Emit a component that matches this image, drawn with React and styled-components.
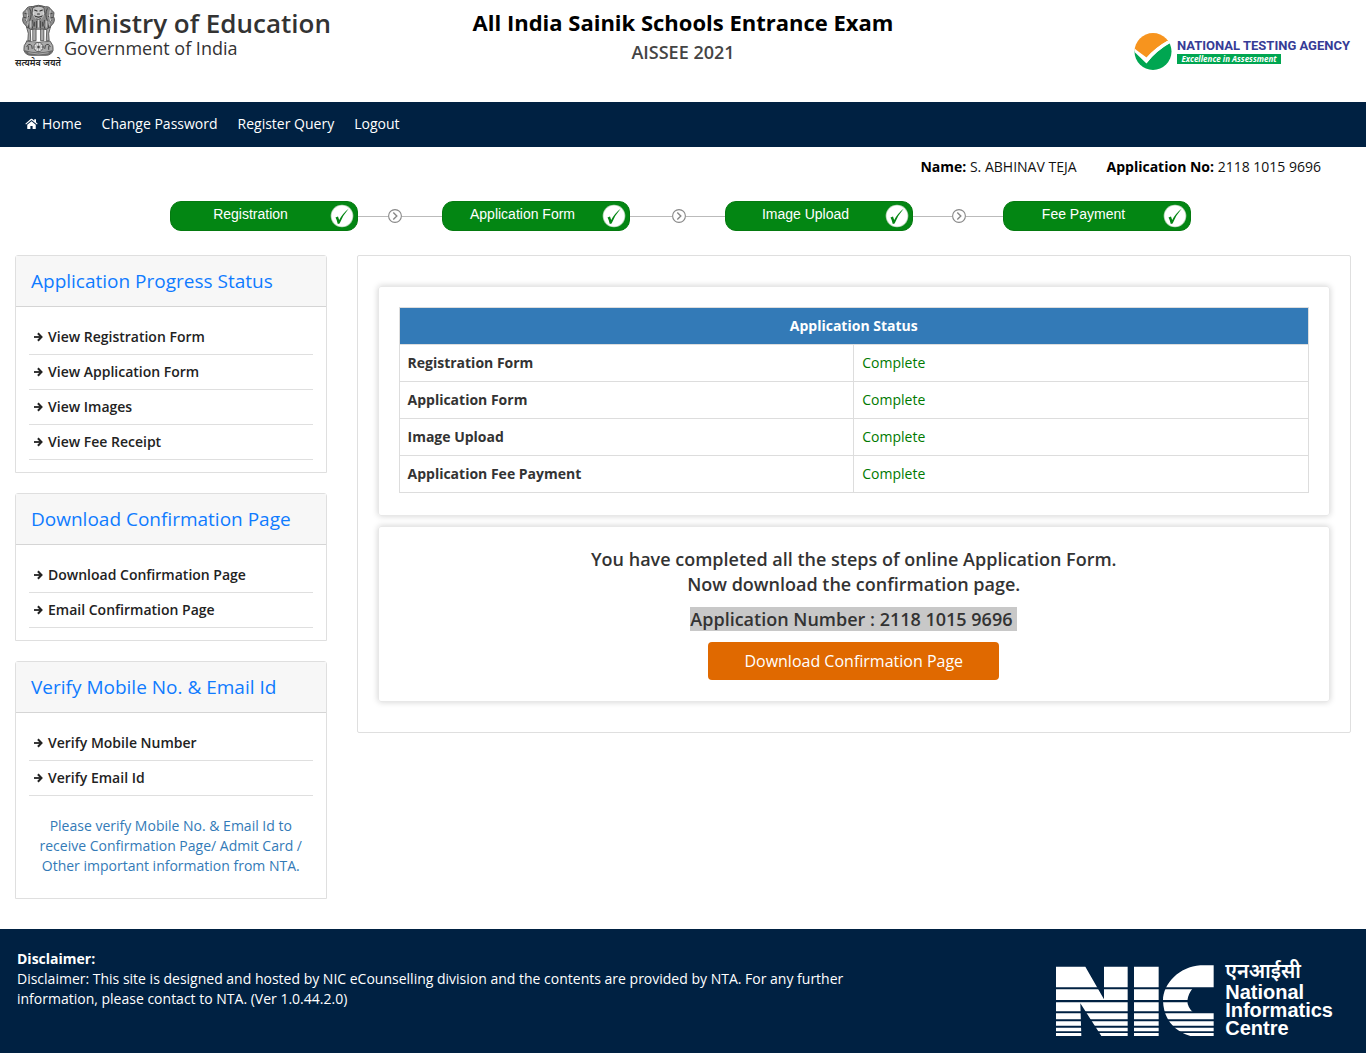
import React from "react";
import styled, { createGlobalStyle } from "styled-components";

const navy = "#002142";
const line = "#dfdfdf";

const GlobalStyle = createGlobalStyle`
  *, *::before, *::after { box-sizing: border-box; }
  body {
    margin: 0;
    background: #fff;
    color: #333;
    font: 400 14px/20px "Open Sans", "Noto Sans", sans-serif;
  }
  h1, h2, p, ul, ol { margin: 0; padding: 0; }
  ul, ol { list-style: none; }
  a { color: inherit; text-decoration: none; }
`;

const Header = styled.header`
  display: grid;
  grid-template-columns: 1fr auto 1fr;
  height: 102px;
  padding: 0 16px;
`;

const Ministry = styled.div`
  display: flex;
  gap: 4px;
  padding-top: 4px;
`;

const EmblemFigure = styled.div`
  display: flex;
  flex-direction: column;
  align-items: center;
  width: 44px;
`;

const Motto = styled.span`
  color: #222;
  font-size: 9px;
  font-weight: 600;
  line-height: 12px;
  white-space: nowrap;
`;

const MinistryText = styled.div`
  padding-top: 4px;
  color: #333;
`;

const MinistryName = styled.div`
  font-size: 26px;
  font-weight: 600;
  line-height: 30px;
`;

const MinistrySub = styled.div`
  font-size: 18px;
  line-height: 20px;
`;

const Titles = styled.div`
  padding-top: 7px;
  text-align: center;
`;

const ExamTitle = styled.h1`
  color: #000;
  font-size: 22px;
  font-weight: 700;
  line-height: 30px;
`;

const ExamYear = styled.p`
  color: #444;
  font-size: 18px;
  font-weight: 600;
  line-height: 30px;
`;

const Agency = styled.div`
  display: flex;
  align-items: flex-start;
  justify-content: flex-end;
  gap: 5px;
  padding-top: 32px;
`;

const AgencyText = styled.div`
  padding-top: 6px;
  white-space: nowrap;
`;

const AgencyName = styled.div`
  color: #363c96;
  font: 700 13px/16px Roboto, sans-serif;
`;

const AgencyMotto = styled.div`
  width: 104px;
  background: #00a651;
  color: #fff;
  font: italic 700 8px/10px "Open Sans", sans-serif;
  text-align: center;
`;

const Nav = styled.nav`
  display: flex;
  gap: 20px;
  height: 45px;
  padding: 12px 25px;
  background: ${navy};
  color: #fff;
`;

const NavLink = styled.a`
  display: flex;
  align-items: center;
  gap: 4px;
  height: 20px;
`;

const Candidate = styled.div`
  display: flex;
  justify-content: flex-end;
  gap: 30px;
  padding: 10px 45px 0;
  color: #111;

  strong { color: #000; font-weight: 700; }
`;

const Steps = styled.ol`
  display: flex;
  justify-content: center;
  padding: 24px 5px 24px 0;
`;

const Step = styled.li`
  display: flex;
  align-items: center;
`;

const Pill = styled.div`
  display: flex;
  align-items: center;
  width: 188px;
  height: 30px;
  padding-right: 3px;
  border: 1px solid #057a10;
  border-radius: 11px;
  background: #038613;
  color: #fff;
  font: 14px/16px "Liberation Sans", Arial, sans-serif;
`;

const PillLabel = styled.span`
  flex: 1;
  padding-bottom: 4px;
  text-align: center;
`;

const Track = styled.span`
  width: ${(p) => p.$width}px;
  height: 1px;
  background: #bbb;
`;

const Columns = styled.div`
  display: grid;
  grid-template-columns: 1fr 3fr;
  align-items: start;
  padding-bottom: 30px;
`;

const Sidebar = styled.aside`
  display: flex;
  flex-direction: column;
  gap: 20px;
  padding: 0 15px;
`;

const Panel = styled.section`
  border: 1px solid ${line};
  border-radius: 3px 3px 0 0;
`;

const PanelTitle = styled.h2`
  padding: 10px 15px;
  border-bottom: 1px solid #d5d5d5;
  background: #f7f7f7;
  color: #0f7bff;
  font-size: 19px;
  font-weight: 400;
  line-height: 30px;
`;

const PanelBody = styled.div`
  padding: 13px 13px 12px;
`;

const LinkRow = styled.li`
  border-bottom: 1px solid ${line};
`;

const PanelLink = styled.a`
  display: flex;
  align-items: center;
  gap: 5px;
  padding: 7px 4px;
  color: #222;
  font-weight: 600;
`;

const Note = styled.p`
  padding: 20px 10px 10px;
  color: #337ab7;
  text-align: center;
`;

const MainColumn = styled.main`
  padding: 0 15px;
`;

const Board = styled.div`
  display: flex;
  flex-direction: column;
  gap: 10px;
  padding: 30px 20px;
  border: 1px solid ${line};
  border-radius: 2px;
`;

const Card = styled.section`
  padding: 20px 20px ${(p) => p.$bottom}px;
  border: 1px solid #e8e8e8;
  border-radius: 3px;
  box-shadow: 0 0 6px rgba(0, 0, 0, 0.18);
  text-align: center;
`;

const StatusTable = styled.table`
  width: 100%;
  border-collapse: collapse;
  table-layout: fixed;
  text-align: left;

  th, td {
    height: 37px;
    padding: 8px;
    border: 1px solid #ddd;
  }
  thead th {
    background: #337ab7;
    color: #fff;
    font-weight: 700;
    text-align: center;
  }
  tbody th { font-weight: 700; }
  td { color: #007a00; }
`;

const Message = styled.p`
  font-size: 18px;
  font-weight: 600;
  line-height: 25px;
  margin-bottom: 10px;

  mark { background: #c8c8c8; color: inherit; white-space: pre-wrap; }
`;

const DownloadButton = styled.button`
  display: block;
  margin: 0 auto;
  padding: 9px 36px;
  border: 0;
  border-radius: 4px;
  background: #e06900;
  color: #fff;
  font: 400 16px/20px "Open Sans", sans-serif;
`;

const Footer = styled.footer`
  display: flex;
  justify-content: space-between;
  min-height: 124px;
  padding: 20px 33px 0 17px;
  background: ${navy};
  color: #fff;
`;

const Disclaimer = styled.div`
  flex: 0 1 65%;

  strong { display: block; font-weight: 700; }
`;

const Nic = styled.div`
  display: flex;
  align-items: flex-end;
  gap: 11px;
  height: 88px;
`;

const NicText = styled.div`
  font: 700 20px/18px "Liberation Sans", "Noto Sans Devanagari", Arial, sans-serif;
  white-space: nowrap;
`;

const NicHindi = styled.div`
  font-weight: 600;
  line-height: 24px;
`;

const Emblem = () => (
  <svg width="35" height="53" viewBox="0 0 36 53" aria-label="State emblem of India">
    <g fill="#8b8b8b" stroke="#444" strokeWidth="0.8" strokeLinecap="round">
      <path d="M11 2 Q18 -1 25 2 Q29 1 31 5 L34 8 L33.500 12 Q36 17 31.500 21 L27 27 H9 L4.500 21 Q0 17 2.500 12 L2 8 L5 5 Q7 1 11 2Z" />
      <path fill="#c4c4c4" d="M12.500 3 Q18 0 23.500 3 L24.500 9 Q22 15 18 15 Q14 15 11.500 9Z" />
      <path fill="none" stroke="#2a2a2a" strokeWidth="1.100" d="M14 5.500 L16.500 6.500 M22 5.500 L19.500 6.500 M17 9.500 H19 M14 11.500 Q18 14 22 11.500" />
      <path fill="none" stroke="#333" strokeWidth="0.800" d="M9 4 Q12 10 9 16 M27 4 Q24 10 27 16 M4 9 L7 9.500 M32 9 L29 9.500 M3 13 Q6 15 8 12 M33 13 Q30 15 28 12 M12 16 Q14 21 11 26 M24 16 Q22 21 25 26 M16 17 V24 M20 17 V24 M5 16 Q9 20 8 25 M31 16 Q27 20 28 25 M14 18 V22 M22 18 V22" />
      <path fill="none" stroke="#e2e2e2" strokeWidth="0.8" d="M13 8 Q12 12 15 14 M23 8 Q24 12 21 14 M6 6 Q8 12 5.500 17 M30 6 Q28 12 30.500 17 M18 16 V23 M10 17 V23 M26 17 V23 M7 18 V21 M29 18 V21" />
      <path fill="#fff" stroke="none" d="M9 26 H27 V37 H9Z" />
      <path fill="#aaa" d="M6 23 L9.500 25 L10 37 H7 L7.500 30Z M12.500 25 H15.500 L15.500 37 H12.500Z M20.500 25 H23.500 L23.500 37 H20.500Z M30 23 L26.500 25 L26 37 H29 L28.500 30Z" />
      <path fill="#aaa" d="M6 37.500 Q18 40 30 37.500 Q34 42 33 47 Q31 52 26 52 H10 Q5 52 3 47 Q2 42 6 37.500Z" />
      <path fill="#6a6a6a" stroke="none" d="M3 46.500 Q18 51.500 33 46.500 Q31 52 26 52 H10 Q5 52 3 46.500Z" />
      <path fill="none" strokeWidth="1" d="M6 43 Q8 39 11 42 L11.500 45 M7.500 43 V46 M30 43 Q28 39 25 42 L24.500 45 M28.500 43 V46" />
      <path fill="none" stroke="#ccc" strokeWidth="0.700" d="M8 49.500 Q18 52 28 49.500" />
      <circle cx="18" cy="43.500" r="4.700" fill="#e4e4e4" />
      <circle cx="18" cy="43.500" r="1.300" fill="#555" stroke="none" />
      <path fill="none" strokeWidth="0.4" d="M18 39 V48 M13.500 43.500 H22.500 M15 40.500 L21 46.500 M21 40.500 L15 46.500" />
    </g>
  </svg>
);

const AgencyMark = () => (
  <svg width="38" height="38" viewBox="0 0 38 38" aria-hidden="true">
    <defs>
      <clipPath id="disc"><circle cx="19" cy="19.500" r="18.500" /></clipPath>
    </defs>
    <g clipPath="url(#disc)">
      <path fill="#f7941e" d="M0 0 H38 V10 L33 9 Q22 15 12.500 26 L0 18Z" />
      <path fill="#00a651" d="M0 18 L12.500 31 Q22 19 37 10.500 L38 11 V39 H0Z" />
      <path fill="#fff" d="M0 16 L3 18.500 L12.500 25.500 Q22 15 33.500 9 L38 9.500 Q22 18.500 12.500 31.500 L0 19.500Z" />
    </g>
  </svg>
);

const HomeIcon = () => (
  <svg width="13" height="12" viewBox="0 0 26 22" fill="#fff" aria-hidden="true">
    <path d="M13 5.500 L4.500 12.500 V20 Q4.500 21.200 5.700 21.200 H10.800 V15 H15.200 V21.200 H20.300 Q21.500 21.200 21.500 20 V12.500Z" />
    <path d="M25.300 10.300 L22 7.500 V1.500 H18.500 V4.500 L14.600 1.200 Q13 0 11.400 1.200 L0.700 10.300 L2 12 L13 3 L24 12Z" />
  </svg>
);

const Check = () => (
  <svg width="24" height="24" viewBox="0 0 24 24" aria-hidden="true">
    <circle cx="12" cy="12" r="11.300" fill="#b9d8bb" />
    <circle cx="12" cy="12" r="10.500" fill="#fff" />
    <path fill="#038613" d="M5.500 13.500 L8 12.600 L9.200 16 Q12.500 9.500 18.800 4.500 Q13 11 9.600 19.500 L7.800 20 Q7 16 5.500 13.500Z" />
  </svg>
);

const Next = () => (
  <svg width="14" height="14" viewBox="0 0 14 14" fill="none" stroke="#888" aria-hidden="true">
    <circle cx="7" cy="7" r="6.400" strokeWidth="1.100" />
    <path strokeWidth="1.400" d="M5.300 3.600 L8.800 7 L5.300 10.400" />
  </svg>
);

const Arrow = () => (
  <svg width="10" height="10" viewBox="0 0 10 10" fill="none" stroke="#222" aria-hidden="true">
    <path strokeWidth="1.800" d="M1 5 H8.500" />
    <path strokeWidth="2" d="M4.900 1.300 L8.500 5 L4.900 8.700" />
  </svg>
);

const bands = [[45, 67], [118, 32], [157, 27], [190, 18], [214, 13], [233, 11], [249, 9]];

const NicMark = () => (
  <svg width="158" height="72" viewBox="49 45 474 216" aria-label="NIC">
    <defs>
      <clipPath id="bands">
        {bands.map(([y, h]) => <rect key={y} x="49" y={y} width="474" height={h} />)}
      </clipPath>
    </defs>
    <g fill="#fff" clipPath="url(#bands)">
      <path d="M49 50 H137 L193 148 V50 H264 V258 H185 L122 160 L125 258 H49Z" />
      <path d="M283 50 H357 V258 H283Z" />
      <path d="M522 46 H482 C420 50 370 100 370 152 C372 205 400 242 452 258 H522 V187 H460 Q443 170 443 152 Q445 132 460 114 H522Z" />
    </g>
  </svg>
);

const steps = [
  { label: "Registration", before: 30, after: 40 },
  { label: "Application Form", before: 42, after: 39 },
  { label: "Image Upload", before: 39, after: 37 },
  { label: "Fee Payment" },
];

const panels = [
  {
    title: "Application Progress Status",
    links: ["View Registration Form", "View Application Form", "View Images", "View Fee Receipt"],
  },
  {
    title: "Download Confirmation Page",
    links: ["Download Confirmation Page", "Email Confirmation Page"],
  },
  {
    title: "Verify Mobile No. & Email Id",
    links: ["Verify Mobile Number", "Verify Email Id"],
    note: "Please verify Mobile No. & Email Id to receive Confirmation Page/ Admit Card / Other important information from NTA.",
  },
];

const statuses = ["Registration Form", "Application Form", "Image Upload", "Application Fee Payment"];

export default function App() {
  return (
    <>
      <GlobalStyle />
      <Header>
        <Ministry>
          <EmblemFigure>
            <Emblem />
            <Motto lang="hi">सत्यमेव जयते</Motto>
          </EmblemFigure>
          <MinistryText>
            <MinistryName>Ministry of Education</MinistryName>
            <MinistrySub>Government of India</MinistrySub>
          </MinistryText>
        </Ministry>
        <Titles>
          <ExamTitle>All India Sainik Schools Entrance Exam</ExamTitle>
          <ExamYear>AISSEE 2021</ExamYear>
        </Titles>
        <Agency>
          <AgencyMark />
          <AgencyText>
            <AgencyName>NATIONAL TESTING AGENCY</AgencyName>
            <AgencyMotto>Excellence in Assessment</AgencyMotto>
          </AgencyText>
        </Agency>
      </Header>
      <Nav>
        <NavLink href="#home"><HomeIcon />Home</NavLink>
        <NavLink href="#password">Change Password</NavLink>
        <NavLink href="#query">Register Query</NavLink>
        <NavLink href="#logout">Logout</NavLink>
      </Nav>
      <Candidate>
        <span><strong>Name:</strong> S. ABHINAV TEJA</span>
        <span><strong>Application No:</strong> 2118 1015 9696</span>
      </Candidate>
      <Steps>
        {steps.map((s) => (
          <Step key={s.label}>
            <Pill><PillLabel>{s.label}</PillLabel><Check /></Pill>
            {s.before && (
              <>
                <Track $width={s.before} />
                <Next />
                <Track $width={s.after} />
              </>
            )}
          </Step>
        ))}
      </Steps>
      <Columns>
        <Sidebar>
          {panels.map((p) => (
            <Panel key={p.title}>
              <PanelTitle>{p.title}</PanelTitle>
              <PanelBody>
                <ul>
                  {p.links.map((l) => (
                    <LinkRow key={l}><PanelLink href="#"><Arrow />{l}</PanelLink></LinkRow>
                  ))}
                </ul>
                {p.note && <Note>{p.note}</Note>}
              </PanelBody>
            </Panel>
          ))}
        </Sidebar>
        <MainColumn>
          <Board>
            <Card $bottom={22}>
              <StatusTable>
                <thead>
                  <tr><th colSpan={2} scope="colgroup">Application Status</th></tr>
                </thead>
                <tbody>
                  {statuses.map((s) => (
                    <tr key={s}><th scope="row">{s}</th><td>Complete</td></tr>
                  ))}
                </tbody>
              </StatusTable>
            </Card>
            <Card $bottom={21}>
              <Message>
                You have completed all the steps of online Application Form.<br />
                Now download the confirmation page.
              </Message>
              <Message><mark>{"Application Number : 2118 1015 9696 "}</mark></Message>
              <DownloadButton type="button">Download Confirmation Page</DownloadButton>
            </Card>
          </Board>
        </MainColumn>
      </Columns>
      <Footer>
        <Disclaimer>
          <strong>Disclaimer:</strong>
          Disclaimer: This site is designed and hosted by NIC eCounselling division and the contents
          are provided by NTA. For any further information, please contact to NTA. (Ver 1.0.44.2.0)
        </Disclaimer>
        <Nic>
          <NicMark />
          <NicText>
            <NicHindi lang="hi">एनआईसी</NicHindi>
            <div>National</div>
            <div>Informatics</div>
            <div>Centre</div>
          </NicText>
        </Nic>
      </Footer>
    </>
  );
}
